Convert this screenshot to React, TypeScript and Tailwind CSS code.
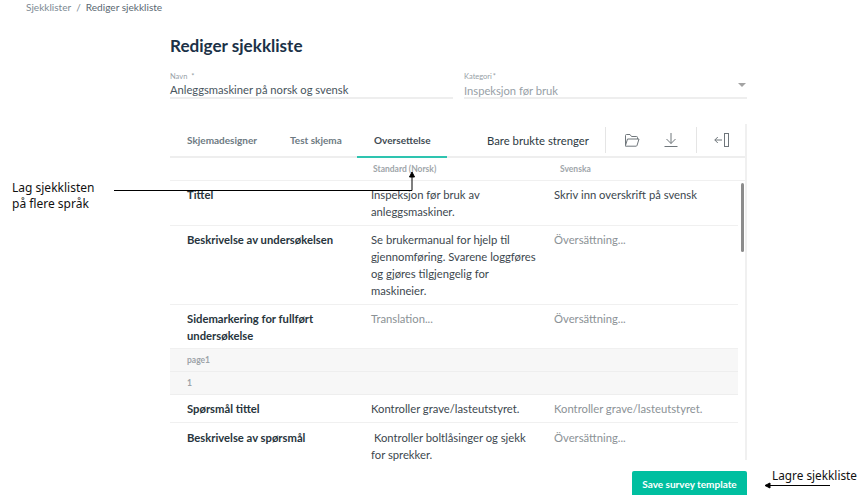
import React from "react";

interface Row {
  label?: string;
  source?: string;
  target?: string;
  muted?: boolean;
  sourceMuted?: boolean;
  height: string;
  section?: boolean;
}

const rows: Row[] = [
  { label: "Tittel", source: "Inspeksjon før bruk av anleggsmaskiner.", target: "Skriv inn overskrift på svensk", height: "h-[45px] pt-[5px]" },
  { label: "Beskrivelse av undersøkelsen", source: "Se brukermanual for hjelp til gjennomføring. Svarene loggføres og gjøres tilgjengelig for maskineier.", target: "Översättning...", muted: true, height: "h-[79px] pt-[5px]" },
  { label: "Sidemarkering for fullført undersøkelse", source: "Translation...", sourceMuted: true, target: "Översättning...", muted: true, height: "h-[44px] pt-[5px]" },
  { label: "page1", section: true, height: "h-[23px]" },
  { label: "1", section: true, height: "h-[23px]" },
  { label: "Spørsmål tittel", source: "Kontroller grave/lasteutstyret.", target: "Kontroller grave/lasteutstyret.", muted: true, height: "h-[28px] pt-[5px]" },
  { label: "Beskrivelse av spørsmål", source: "\u00a0Kontroller boltlåsinger og sjekk for sprekker.", target: "Översättning...", muted: true, height: "h-[40px] pt-[6px]" },
];

function FolderIcon() {
  return (
    <svg width="16" height="13" viewBox="0 0 16 13" fill="none" stroke="#6f767b" strokeWidth="1">
      <path d="M1.500 11.500V1.500q0-1 1-1h3.500l1.500 2h5q1 0 1 1v1.500" />
      <path d="M1.500 11.500l2-6.500h11.500l-2 6.500q-.2.700-1 .700H1.500z" />
    </svg>
  );
}

function DownloadIcon() {
  return (
    <svg width="14" height="14" viewBox="0 0 14 14" fill="none" stroke="#6f767b" strokeWidth="1">
      <path d="M7 0v10.500M2.500 6l4.500 4.500 4.500-4.500" />
      <path d="M0.500 13.500h13" />
    </svg>
  );
}

function CollapseIcon() {
  return (
    <svg width="15" height="14" viewBox="0 0 15 14" fill="none" stroke="#6f767b" strokeWidth="1">
      <path d="M8 7H0.800M3.800 4l-3 3 3 3" />
      <rect x="10.500" y="0.500" width="4" height="13" />
    </svg>
  );
}

function TranslationRow({ row }: { row: Row }) {
  if (row.section) {
    return (
      <div className={`${row.height} flex items-center pl-[17px] bg-[#f7f7f7] border-b border-[#eeeeee] text-[8.500px] font-bold text-[#9ca3a8]`}>
        {row.label}
      </div>
    );
  }
  return (
    <div className={`${row.height} grid grid-cols-[201px_183px_1fr] border-b border-[#f0f0f0] last:border-b-0 text-[11.250px] leading-[17px]`}>
      <div className="pl-[17px] pr-2 font-bold text-[#27343c]">{row.label}</div>
      <div className={`pr-[12px] ${row.sourceMuted ? "text-[#8b9296]" : "text-[#3c474e]"}`}>{row.source}</div>
      <div className={row.muted ? "text-[#8b9296]" : "text-[#3c474e]"}>{row.target}</div>
    </div>
  );
}

export default function App() {
  return (
    <div className="relative w-[857px] h-[495px] overflow-hidden bg-white font-['Lato','Liberation_Sans',sans-serif]">
      {/* Breadcrumb */}
      <div className="h-[14px] pl-[26px] flex items-center gap-[5px] text-[10.100px] leading-[14px] text-[#7d8a93]">
        <span>Sjekklister</span>
        <span>/</span>
        <span className="text-[#5a6872]">Rediger sjekkliste</span>
      </div>

      <div className="ml-[170px] w-[577px]">
        <h1 className="mt-[22px] h-[20px] text-[17.100px] leading-[20px] font-bold text-[#1b3147]">Rediger sjekkliste</h1>

        {/* Fields */}
        <div className="mt-[15px] grid grid-cols-[283px_283px] gap-x-[11px]">
          <div className="border-b-2 border-[#eeeeee] h-[28px] pt-[1px]">
            <div className="text-[7.500px] leading-[10px] text-[#98a1a7]">Navn &nbsp;*</div>
            <div className="text-[11.200px] leading-[15px] text-[#49565e]">Anleggsmaskiner på norsk og svensk</div>
          </div>
          <div className="relative border-b-2 border-[#eeeeee] h-[28px] pt-[1px]">
            <div className="text-[7.500px] leading-[10px] text-[#98a1a7]">Kategori{"\u2009"}*</div>
            <div className="mt-[1px] text-[11.200px] leading-[15px] text-[#98a1a7]">Inspeksjon før bruk</div>
            <div className="absolute right-[1px] top-[12px] w-0 h-0 border-l-[4px] border-r-[4px] border-t-[4px] border-l-transparent border-r-transparent border-t-[#a3a3a3]" />
          </div>
        </div>

        {/* Editor card */}
        <div className="mt-[25px] h-[336px] border-r-2 border-[#f0f0f0] relative">
          <div className="h-[34px] flex items-stretch border-b-2 border-[#eeeeee] text-[10px]">
            <div className="w-[120px] pl-[17px] pt-[1px] flex items-center font-bold text-[#6d7a82]">Skjemadesigner</div>
            <div className="w-[67px] pt-[1px] flex items-center font-bold text-[#6d7a82]">Test skjema</div>
            <div className="w-[90px] -mb-[2px] pl-[17px] flex items-center font-bold text-[#3f4b53] border-b-2 border-[#2ec4b0]">Oversettelse</div>
            <div className="ml-[40px] w-[118px] pt-[2px] flex items-center text-[11.300px] text-[#2d3a42]">Bare brukte strenger</div>
            <div className="my-[3px] w-[91px] pl-[18px] gap-[24px] border-l border-[#e5e5e5] flex items-center">
              <FolderIcon />
              <DownloadIcon />
            </div>
            <div className="my-[3px] flex-1 pl-[17px] border-l border-[#e5e5e5] flex items-center"><CollapseIcon /></div>
          </div>

          <div className="h-[23px] grid grid-cols-[203px_187px_1fr] items-center border-b border-[#f0f0f0] text-[8.500px] font-bold text-[#a0a6aa]">
            <span className="col-start-2">Standard (Norsk)</span>
            <span>Svenska</span>
          </div>

          <div className="w-[568px]">
            {rows.map((row) => (
              <TranslationRow key={row.label} row={row} />
            ))}
          </div>

          {/* Scrollbar */}
          <div className="absolute right-[1px] top-[59px] w-[3px] h-[69px] rounded-full bg-[#8c8c8c]" />
        </div>

        <div className="mt-[11px] flex justify-end">
          <button className="w-[115px] h-[26px] rounded-[2px] bg-[#00bfa0] text-white text-[10px] font-bold">Save survey template</button>
        </div>
      </div>

      {/* Annotations */}
      <div className="absolute left-[12px] top-[180px] text-[12px] leading-[16px] text-[#111111] font-['Noto_Sans',sans-serif]">
        <div>Lag sjekklisten</div>
        <div>på flere språk</div>
      </div>
      <div className="absolute left-[772px] top-[467px] whitespace-nowrap text-[11.800px] leading-[16px] text-[#111111] font-['Noto_Sans',sans-serif]">Lagre sjekkliste</div>
      <svg className="absolute left-0 top-0 pointer-events-none" width="857" height="495" fill="none" stroke="#000000">
        <path d="M114 190.500H412V175" />
        <path d="M412 172l-2.500 5h5z" fill="#000000" />
        <path d="M830 485.500H768" />
        <path d="M765 485.500l5-2.500v5z" fill="#000000" />
      </svg>
    </div>
  );
}
